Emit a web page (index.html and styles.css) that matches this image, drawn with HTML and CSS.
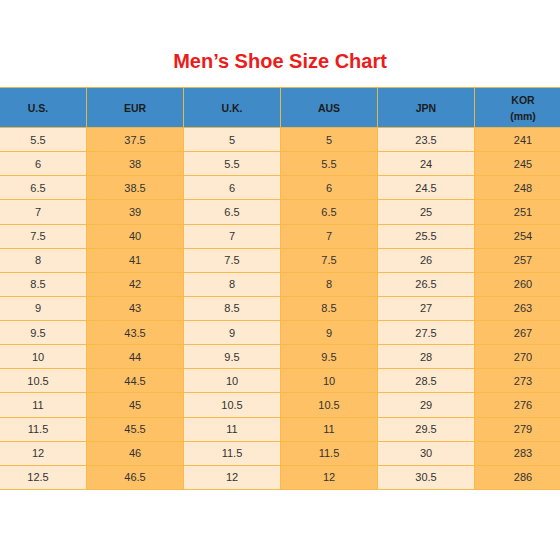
FILE: index.html
```html
<!DOCTYPE html>
<html lang="en">
<head>
    <meta charset="UTF-8">
    <meta name="viewport" content="width=device-width, initial-scale=1.0">
    <title>Men’s Shoe Size Chart</title>
    <link rel="stylesheet" href="styles.css">
</head>
<body>
    <div class="chart">
        <h1>Men’s Shoe Size Chart</h1>

        <table class="size-table">
            <thead>
                <tr>
                    <th>U.S.</th>
                    <th>EUR</th>
                    <th>U.K.</th>
                    <th>AUS</th>
                    <th>JPN</th>
                    <th>KOR<br>(mm)</th>
                </tr>
            </thead>
            <tbody>
                <tr><td>5.5</td><td>37.5</td><td>5</td><td>5</td><td>23.5</td><td>241</td></tr>
                <tr><td>6</td><td>38</td><td>5.5</td><td>5.5</td><td>24</td><td>245</td></tr>
                <tr><td>6.5</td><td>38.5</td><td>6</td><td>6</td><td>24.5</td><td>248</td></tr>
                <tr><td>7</td><td>39</td><td>6.5</td><td>6.5</td><td>25</td><td>251</td></tr>
                <tr><td>7.5</td><td>40</td><td>7</td><td>7</td><td>25.5</td><td>254</td></tr>
                <tr><td>8</td><td>41</td><td>7.5</td><td>7.5</td><td>26</td><td>257</td></tr>
                <tr><td>8.5</td><td>42</td><td>8</td><td>8</td><td>26.5</td><td>260</td></tr>
                <tr><td>9</td><td>43</td><td>8.5</td><td>8.5</td><td>27</td><td>263</td></tr>
                <tr><td>9.5</td><td>43.5</td><td>9</td><td>9</td><td>27.5</td><td>267</td></tr>
                <tr><td>10</td><td>44</td><td>9.5</td><td>9.5</td><td>28</td><td>270</td></tr>
                <tr><td>10.5</td><td>44.5</td><td>10</td><td>10</td><td>28.5</td><td>273</td></tr>
                <tr><td>11</td><td>45</td><td>10.5</td><td>10.5</td><td>29</td><td>276</td></tr>
                <tr><td>11.5</td><td>45.5</td><td>11</td><td>11</td><td>29.5</td><td>279</td></tr>
                <tr><td>12</td><td>46</td><td>11.5</td><td>11.5</td><td>30</td><td>283</td></tr>
                <tr><td>12.5</td><td>46.5</td><td>12</td><td>12</td><td>30.5</td><td>286</td></tr>
            </tbody>
        </table>
    </div>
</body>
</html>
```

FILE: styles.css
```css
body {
    margin: 0;
    background: #ffffff;
    font-family: 'Liberation Sans', Arial, sans-serif;
    overflow: hidden;
}
.chart {
    width: 560px;
    padding-top: 50px;
}
h1 {
    margin: 0 0 15px;
    text-align: center;
    font-size: 20px;
    font-weight: bold;
    color: #ee1b1b;
    line-height: 22px;
}
.size-table {
    width: 583px;
    margin-left: -11px;
    border-collapse: collapse;
    table-layout: fixed;
    text-align: center;
}
.size-table th {
    height: 39px;
    padding: 0;
    background-color: #418ac8;
    border: 1px solid #e9b64a;
    color: #1c1c1c;
    font-size: 10.5px;
    font-weight: bold;
    line-height: 16px;
}
.size-table td {
    height: 23.13px;
    padding: 0;
    border: 1px solid #f8bb4a;
    background-color: #feead0;
    color: #333333;
    font-size: 11px;
}
.size-table td:nth-child(even) {
    background-color: #fec166;
}
```
